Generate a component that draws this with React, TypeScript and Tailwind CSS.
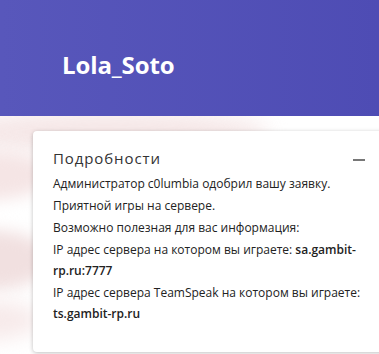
export default function App() {
  const font = { fontFamily: '"Open Sans", "Noto Sans", sans-serif' };
  return (
    <div className="relative w-[379px] h-[354px] overflow-hidden bg-white flex flex-col" style={font}>
      {/* faded flag in background */}
      <div className="absolute left-[-60px] top-[112px] w-[330px] h-[40px] rounded-[50%] bg-[#f3e1e1] blur-[10px] opacity-80" />
      <div className="absolute left-[-70px] top-[150px] w-[120px] h-[50px] rounded-[50%] bg-[#f5e5e5] blur-[8px]" />
      <div className="absolute left-[-70px] top-[230px] w-[120px] h-[60px] rounded-[50%] bg-[#f1e0e0] blur-[8px]" />
      <div className="absolute left-[-70px] top-[300px] w-[110px] h-[40px] rounded-[50%] bg-[#f7eaea] blur-[10px]" />

      <header className="relative h-[116px] shrink-0 bg-gradient-to-r from-[#5857bb] to-[#4e4cb4] flex items-center pl-[62px] pt-[14px]">
        <h1 className="text-white text-[24px] font-bold tracking-[-0.1px]">Lola_Soto</h1>
      </header>

      <div className="relative ml-[33px] mt-[15px] w-[352px] h-[221px] bg-white rounded-[4px] shadow-[0_1px_4px_rgba(0,0,0,0.25)] px-[20px] pt-[17px] flex flex-col gap-[5px]">
        <div className="flex items-center justify-between">
          <h2 className="text-[15px] leading-[20px] tracking-[0.9px] text-[#333]">Подробности</h2>
          <div className="w-[12px] h-[2px] bg-[#777] mt-[3px]" />
        </div>
        <div className="flex flex-col gap-[1px] text-[12px] leading-[21px] text-[#222]">
          <p>Администратор c0lumbia одобрил вашу заявку.</p>
          <p>Приятной игры на сервере.</p>
          <p>Возможно полезная для вас информация:</p>
          <p>
            IP адрес сервера на котором вы играете: <b className="font-semibold">sa.gambit-rp.ru:7777</b>
          </p>
          <p>
            IP адрес сервера TeamSpeak на котором вы играете: <b className="font-semibold">ts.gambit-rp.ru</b>
          </p>
        </div>
      </div>
    </div>
  );
}
